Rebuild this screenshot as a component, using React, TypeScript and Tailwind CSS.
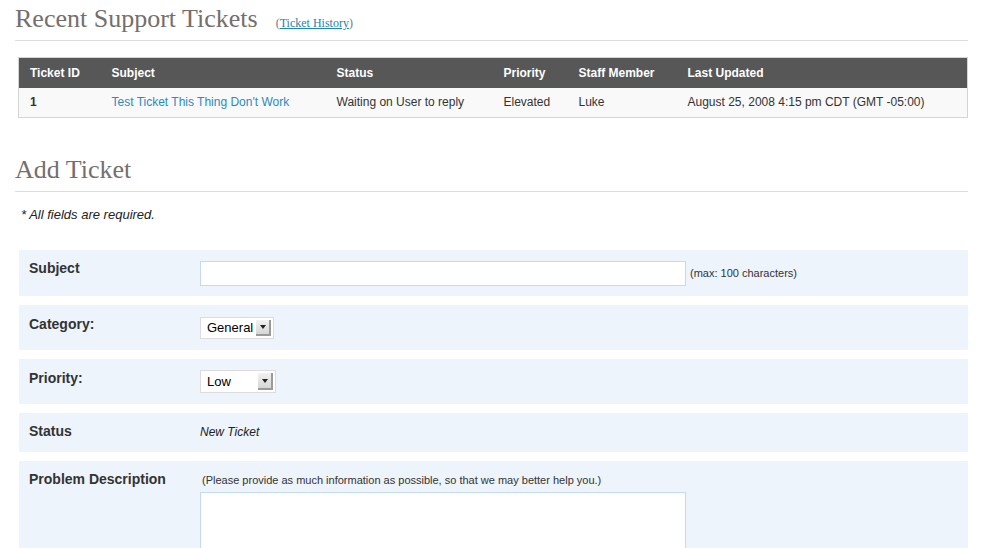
const sans = "font-['Liberation_Sans',Arial,sans-serif]";
const serif = "font-['Liberation_Serif','Times_New_Roman',serif]";

function FakeSelect({ value, width }: { value: string; width: string }) {
  return (
    <div className={`relative flex h-full items-center border border-[#dcdcdc] bg-white pl-[6px] ${width}`}>
      <span className={`text-[13px] text-black ${sans}`}>{value}</span>
      <span className="absolute right-[2px] top-[2px] bottom-[2px] flex w-[15px] items-center justify-center border-r-2 border-b-2 border-[#9a9a9a] bg-gradient-to-b from-[#f2f2f2] to-[#d6d6d6]">
        <span className="h-0 w-0 border-x-[3px] border-t-[4px] border-x-transparent border-t-[#222]" />
      </span>
    </div>
  );
}

export default function App() {
  const cols = [
    { label: "Ticket ID", w: "w-[82px]" },
    { label: "Subject", w: "w-[225px]" },
    { label: "Status", w: "w-[167px]" },
    { label: "Priority", w: "w-[75px]" },
    { label: "Staff Member", w: "w-[109px]" },
    { label: "Last Updated", w: "" },
  ];

  return (
    <div className={`min-h-screen bg-white pl-[15px] pr-[24px] text-[#333] ${sans}`}>
      <div className="flex items-baseline border-b border-[#dddddd] pt-[4px] pb-[6px]">
        <h2 className={`text-[26px] leading-[30px] text-[#746f6c] ${serif}`}>Recent Support Tickets</h2>
        <span className={`ml-[18px] text-[12px] text-[#777] ${serif}`}>
          (<a href="#" className="text-[#2583ad] underline">Ticket History</a>)
        </span>
      </div>

      <table className="ml-[3px] mt-[16px] w-[950px] table-fixed border-collapse border border-[#d4d4d4]">
        <thead>
          <tr className="h-[30px] bg-[#575757]">
            {cols.map((c) => (
              <th key={c.label} className={`${c.w} pl-[11px] text-left text-[12px] font-bold text-white`}>
                {c.label}
              </th>
            ))}
          </tr>
        </thead>
        <tbody>
          <tr className="h-[30px] bg-[#f9f9f9] text-[12px] text-[#333]">
            <td className="pl-[11px] font-bold">1</td>
            <td className="pl-[11px]">
              <a href="#" className="text-[#2a8bbf]">Test Ticket This Thing Don't Work</a>
            </td>
            <td className="pl-[11px]">Waiting on User to reply</td>
            <td className="pl-[11px]">Elevated</td>
            <td className="pl-[11px]">Luke</td>
            <td className="pl-[11px]">August 25, 2008 4:15 pm CDT (GMT -05:00)</td>
          </tr>
        </tbody>
      </table>

      <div className="mt-[37px] border-b border-[#dddddd] pb-[6px]">
        <h2 className={`text-[26px] leading-[30px] text-[#746f6c] ${serif}`}>Add Ticket</h2>
      </div>

      <p className="ml-[6px] mt-[14px] text-[13px] italic leading-[18px] text-[#222]">* All fields are required.</p>

      <div className="ml-[4px] mt-[26px] flex flex-col gap-[9px]">
        <div className="flex h-[46px] bg-[#edf4fb]">
          <div className="w-[181px] pl-[10px] pt-[10px] text-[14px] font-bold leading-[17px]">Subject</div>
          <div className="flex items-center self-start pt-[11px]">
            <input type="text" className="h-[25px] w-[486px] border border-[#c5daee] bg-white outline-none" />
            <span className="ml-[4px] text-[11px] text-[#333]">(max: 100 characters)</span>
          </div>
        </div>

        <div className="flex h-[45px] bg-[#edf4fb]">
          <div className="w-[181px] pl-[10px] pt-[11px] text-[14px] font-bold leading-[17px]">Category:</div>
          <div className="mt-[12px] h-[22px]">
            <FakeSelect value="General" width="w-[74px]" />
          </div>
        </div>

        <div className="flex h-[45px] bg-[#edf4fb]">
          <div className="w-[181px] pl-[10px] pt-[11px] text-[14px] font-bold leading-[17px]">Priority:</div>
          <div className="mt-[11px] h-[23px]">
            <FakeSelect value="Low" width="w-[76px]" />
          </div>
        </div>

        <div className="flex h-[39px] bg-[#edf4fb]">
          <div className="w-[181px] pl-[10px] pt-[10px] text-[14px] font-bold leading-[17px]">Status</div>
          <div className="pt-[12px] text-[12px] italic leading-[15px] text-[#222]">New Ticket</div>
        </div>

        <div className="flex h-[120px] bg-[#edf4fb]">
          <div className="w-[181px] pl-[10px] pt-[10px] text-[14px] font-bold leading-[17px]">Problem Description</div>
          <div className="flex flex-col pt-[12px]">
            <span className="ml-[2px] text-[11px] leading-[14px] text-[#333]">
              (Please provide as much information as possible, so that we may better help you.)
            </span>
            <textarea className="mt-[5px] h-[120px] w-[486px] resize-none border border-[#c5daee] bg-white outline-none" />
          </div>
        </div>
      </div>
    </div>
  );
}
